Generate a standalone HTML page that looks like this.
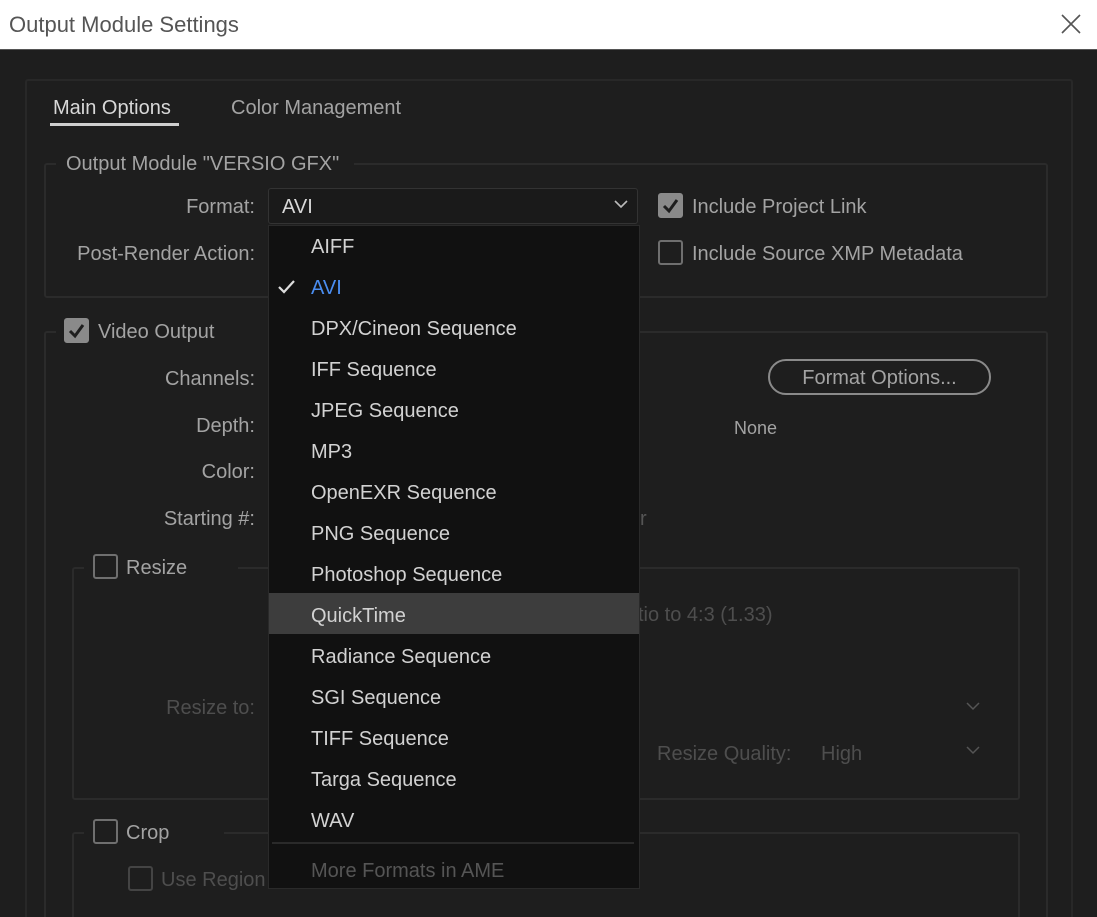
<!DOCTYPE html>
<html style="width:1097px;height:917px;overflow:hidden"><head><meta charset="utf-8"><style>
*{margin:0;padding:0;box-sizing:border-box}
body{width:1097px;height:917px;overflow:hidden;background:#1e1e1e;font-family:"Liberation Sans",sans-serif;font-size:20px;color:#a3a3a3;position:relative}
.a{position:absolute;white-space:nowrap;line-height:24px}
.box{position:absolute;border:2px solid #2b2b2b;border-radius:3px}
.lbl{position:absolute;white-space:nowrap;line-height:24px;text-align:right;width:240px;left:15px}
.cb{position:absolute;width:25px;height:25px;border:2px solid #6f6f6f;border-radius:3px;background:#1e1e1e}
.cb.on{background:#8a8a8a;border-color:#8a8a8a}
.mi{position:absolute;left:42px;line-height:24px;color:#d2d2d2;font-size:20px}
.gap{position:absolute;background:#1e1e1e;height:6px}
</style></head><body>
<div style="position:absolute;left:0;top:0;width:1097px;height:50px;background:#fff;border-bottom:1px solid #555"></div>
<div class="a" style="left:9px;top:13px;font-size:22px;color:#555">Output Module Settings</div>
<svg style="position:absolute;left:1061px;top:14px" width="20" height="20"><path d="M1 1L19 19M19 1L1 19" stroke="#555" stroke-width="1.6"/></svg>

<div class="box" style="left:25px;top:79px;width:1048px;height:860px;border-color:#282828"></div>
<div class="a" style="left:53px;top:96px;color:#d8d8d8;font-size:20px">Main Options</div>
<div style="position:absolute;left:50px;top:123px;width:129px;height:3px;background:#cfcfcf"></div>
<div class="a" style="left:231px;top:96px;font-size:20px">Color Management</div>

<div class="box" style="left:44px;top:163px;width:1004px;height:135px"></div>
<div class="gap" style="left:56px;top:160px;width:298px"></div>
<div class="a" style="left:66px;top:152px">Output Module "VERSIO GFX"</div>
<div class="lbl" style="top:195px">Format:</div>
<div class="lbl" style="top:242px">Post-Render Action:</div>
<div style="position:absolute;left:268px;top:188px;width:370px;height:36px;background:#1a1a1a;border:1px solid #333;border-radius:3px"></div>
<div class="a" style="left:282px;top:195px;color:#d8d8d8;font-size:20px">AVI</div>
<svg style="position:absolute;left:614px;top:199px" width="14" height="10"><path d="M1 2L7 8L13 2" stroke="#bbb" stroke-width="1.6" fill="none"/></svg>
<div class="cb on" style="left:658px;top:193px"></div>
<svg style="position:absolute;left:660px;top:195px" width="21" height="21"><path d="M4 11L9 16L17 5" stroke="#1e1e1e" stroke-width="3" fill="none"/></svg>
<div class="a" style="left:692px;top:195px;font-size:20px">Include Project Link</div>
<div class="cb" style="left:658px;top:240px"></div>
<div class="a" style="left:692px;top:242px;font-size:20px">Include Source XMP Metadata</div>

<div class="box" style="left:44px;top:331px;width:1004px;height:620px"></div>
<div class="gap" style="left:56px;top:328px;width:212px"></div>
<div class="cb on" style="left:64px;top:318px"></div>
<svg style="position:absolute;left:66px;top:320px" width="21" height="21"><path d="M4 11L9 16L17 5" stroke="#1e1e1e" stroke-width="3" fill="none"/></svg>
<div class="a" style="left:98px;top:320px;font-size:20px">Video Output</div>
<div class="lbl" style="top:367px">Channels:</div>
<div class="lbl" style="top:414px">Depth:</div>
<div class="lbl" style="top:460px">Color:</div>
<div class="lbl" style="top:507px">Starting #:</div>
<div class="a" style="left:640px;top:507px;color:#555">r</div>
<div style="position:absolute;left:768px;top:359px;width:223px;height:36px;border:2px solid #8a8a8a;border-radius:18px"></div>
<div class="a" style="left:768px;top:366px;width:223px;text-align:center;font-size:20px">Format Options...</div>
<div class="a" style="left:734px;top:416px;font-size:18px">None</div>

<div class="box" style="left:72px;top:567px;width:948px;height:233px"></div>
<div class="gap" style="left:84px;top:564px;width:154px"></div>
<div class="cb" style="left:93px;top:554px"></div>
<div class="a" style="left:126px;top:556px;font-size:20px">Resize</div>
<div class="a" style="left:638px;top:603px;color:#4e4e4e;font-size:20px">tio to 4:3 (1.33)</div>
<div class="lbl" style="top:696px;color:#4e4e4e">Resize to:</div>
<svg style="position:absolute;left:966px;top:701px" width="14" height="10"><path d="M1 2L7 8L13 2" stroke="#555" stroke-width="1.5" fill="none"/></svg>
<div class="a" style="left:657px;top:742px;color:#4e4e4e;font-size:20px">Resize Quality:</div>
<div class="a" style="left:821px;top:742px;color:#4e4e4e;font-size:20px">High</div>
<svg style="position:absolute;left:966px;top:745px" width="14" height="10"><path d="M1 2L7 8L13 2" stroke="#555" stroke-width="1.5" fill="none"/></svg>

<div class="box" style="left:72px;top:832px;width:948px;height:120px"></div>
<div class="gap" style="left:84px;top:829px;width:140px"></div>
<div class="cb" style="left:93px;top:819px"></div>
<div class="a" style="left:126px;top:821px;font-size:20px">Crop</div>
<div class="cb" style="left:128px;top:866px;border-color:#444"></div>
<div class="a" style="left:161px;top:868px;color:#4e4e4e;font-size:20px">Use Region</div>

<div style="position:absolute;left:268px;top:225px;width:372px;height:664px;background:#111;border:1px solid #2a2a2a">
<div class="mi" style="top:9px">AIFF</div>
<svg style="position:absolute;left:8px;top:52px" width="20" height="18"><path d="M2 9L7 14L17 3" stroke="#ddd" stroke-width="2.2" fill="none"/></svg>
<div class="mi" style="top:50px;color:#4a8df0">AVI</div>
<div class="mi" style="top:91px">DPX/Cineon Sequence</div>
<div class="mi" style="top:132px">IFF Sequence</div>
<div class="mi" style="top:173px">JPEG Sequence</div>
<div class="mi" style="top:214px">MP3</div>
<div class="mi" style="top:255px">OpenEXR Sequence</div>
<div class="mi" style="top:296px">PNG Sequence</div>
<div class="mi" style="top:337px">Photoshop Sequence</div>
<div style="position:absolute;left:0;top:367px;width:370px;height:41px;background:#3d3d3d"></div>
<div class="mi" style="top:378px">QuickTime</div>
<div class="mi" style="top:419px">Radiance Sequence</div>
<div class="mi" style="top:460px">SGI Sequence</div>
<div class="mi" style="top:501px">TIFF Sequence</div>
<div class="mi" style="top:542px">Targa Sequence</div>
<div class="mi" style="top:583px">WAV</div>
<div style="position:absolute;left:3px;top:616px;width:362px;height:2px;background:#2a2a2a"></div>
<div class="mi" style="top:633px;color:#555">More Formats in AME</div>
</div>
</body></html>
